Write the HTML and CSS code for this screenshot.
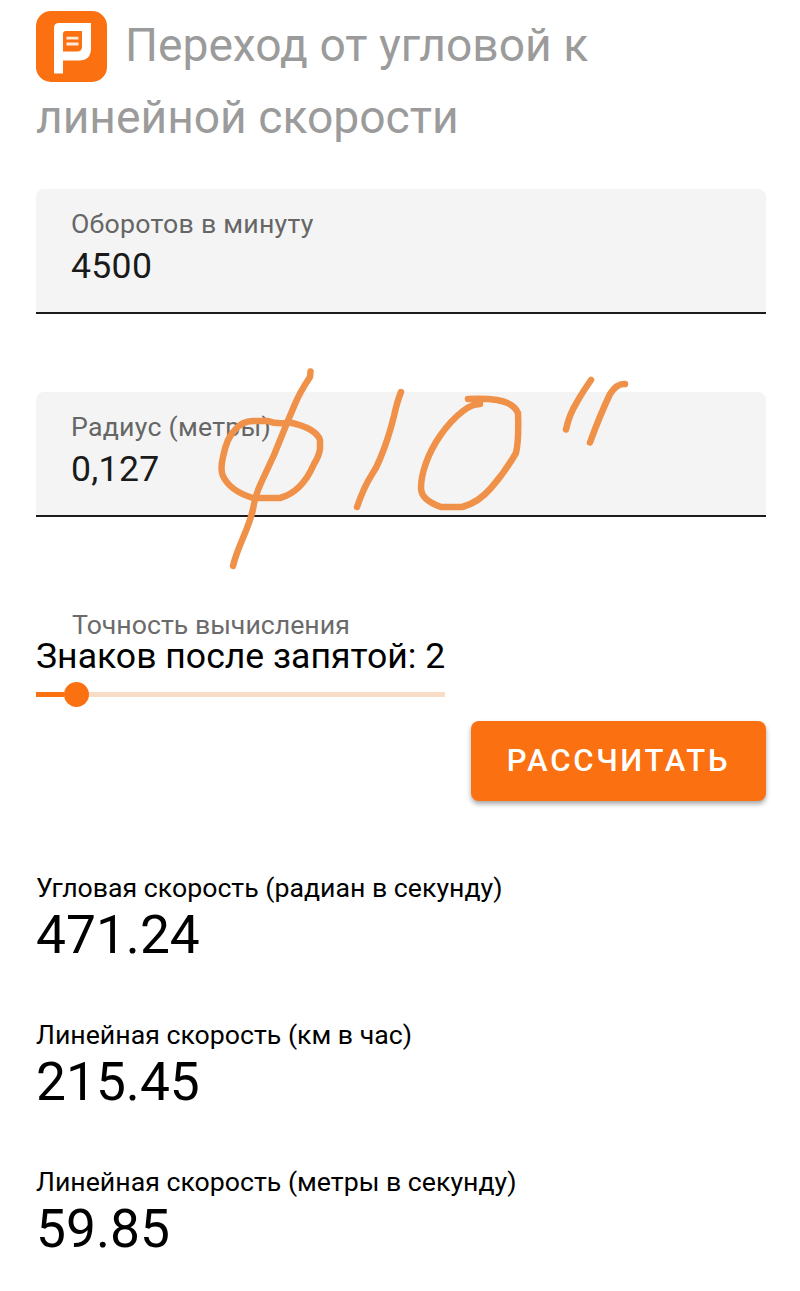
FILE: index.html
```html
<!DOCTYPE html>
<html lang="ru">
<head>
  <meta charset="utf-8">
  <title>Переход от угловой к линейной скорости</title>
  <meta name="viewport" content="width=device-width, initial-scale=1">
  <link rel="stylesheet" href="styles.css">
</head>
<body>
  <h1 class="title"><svg class="logo" viewBox="0 0 71 71">
      <rect width="71" height="71" rx="15" fill="#fb7011"/>
      <path d="M18 62.500V17Q18 12 23 12H55V37Q55 49.500 43 49.500H27V62.500Z" fill="#fff"/>
      <path d="M30 20H46V35.500Q46 40.500 41 40.500H27V23Q27 20 30 20Z" fill="#fb7011"/>
      <path d="M30.500 27.200H42.500M30.500 33H42.500" stroke="#ffeadb" stroke-width="2.800"/>
    </svg>Переход от угловой к линейной скорости</h1>

  <form id="calcForm">
    <div class="field">
      <label for="rpm">Оборотов в минуту</label>
      <input type="text" id="rpm" name="rpm" value="4500">
    </div>

    <div class="field">
      <label for="radius">Радиус (метры)</label>
      <input type="text" id="radius" name="radius" value="0,127">
    </div>

    <div class="precision">
      <div class="precision-label">Точность вычисления</div>
      <div class="precision-value">Знаков после запятой: 2</div>
      <div class="slider">
        <div class="slider-fill"></div>
        <div class="slider-thumb"></div>
        <div class="slider-rest"></div>
      </div>
    </div>

    <button type="button" class="calc-btn">Рассчитать</button>
  </form>

  <div class="result">
    <div class="result-label">Угловая скорость (радиан в секунду)</div>
    <div class="result-value">471.24</div>
  </div>
  <div class="result">
    <div class="result-label">Линейная скорость (км в час)</div>
    <div class="result-value">215.45</div>
  </div>
  <div class="result">
    <div class="result-label">Линейная скорость (метры в секунду)</div>
    <div class="result-value">59.85</div>
  </div>

  <!-- handwritten note over the radius field -->
  <svg class="note" viewBox="200 360 440 220">
    <path d="M310.5 371.5L310 377Q300 392 295 404L287 423L274 455L261 483Q255 496 253 509C249 529 238 545 233 566"/>
    <path d="M286 423Q275 424 268 421H253Q242 421 235 430Q227 437 223 457Q220 470 223 476Q230 491 253 498H280Q302 492 314 464Q319 456 320 449V440Q316 428 288 422"/>
    <path d="M401 392Q397 402 394 416Q388 440 380 459Q377 467 371 476Q364 487 357 507"/>
    <path d="M480 404Q472 404 463 411C445 425 432 446 426 463Q421 477 421 488Q421 500 441 507H462Q478 503 491 488Q505 472 516 453Q519 440 518 413Q514 403 497 400Q485 398 468 399"/>
    <path d="M591 380Q582 393 577 402Q569 415 566 429.500"/>
    <path d="M625 384Q617 383 610 394Q600 415 590 442.500"/>
  </svg>
</body>
</html>
```
FILE: styles.css
```css
* { box-sizing: border-box; }
body { font-family: Roboto, sans-serif; margin: 0; padding: 10px 34px 0 36px; background: #fff; color: #000; }

.title { margin: 0 0 36px; font-size: 46.2px; font-weight: 400; line-height: 71.5px; color: #9b9b9b; }
.logo { width: 71px; height: 71px; margin: 1px 18px -1px 0; vertical-align: top; }

.field { height: 125px; margin-bottom: 77.5px; padding: 19px 36px 0; background: #f4f4f4; border-bottom: 2px solid #1c1c1c; border-radius: 8px 8px 0 0; }
.field label { display: block; margin-left: -1px; font-size: 26.7px; line-height: 32px; letter-spacing: 0.25px; color: #666; }
.field input { display: block; width: 100%; height: 42px; margin: 5px 0 0 -1px; padding: 0; border: none; background: none; font-family: inherit; font-size: 35.6px; letter-spacing: 0.3px; color: #1a1a1a; }

.precision { width: 409px; margin-top: 93px; white-space: nowrap; }
.precision-label { padding-left: 36px; font-size: 26.7px; line-height: 30px; color: #6b6b6b; }
.precision-value { font-size: 35.6px; line-height: 32px; }
.slider { display: flex; align-items: center; height: 26px; margin-top: 10px; }
.slider-fill { width: 28px; height: 5px; background: #fb7011; }
.slider-thumb { width: 25px; height: 25px; border-radius: 50%; background: #fb7011; }
.slider-rest { flex: 1; height: 5px; background: #f9dcc5; }

.calc-btn { display: block; width: 295px; height: 80px; margin: 13px 0 0 auto; padding: 0; border: none; border-radius: 8px; background: #fb7011; color: #fff; font-family: inherit; font-size: 31.1px; font-weight: 500; letter-spacing: 2.7px; text-transform: uppercase; box-shadow: 0 3px 5px rgba(0, 0, 0, 0.35); }

#calcForm { margin-bottom: 72px; }
.result { height: 147px; }
.result-label { font-size: 26.7px; line-height: 31px; }
.result-value { font-size: 53.3px; line-height: 62px; }

.note { position: absolute; left: 200px; top: 360px; width: 440px; height: 220px; fill: none; stroke: #f0914a; stroke-width: 6.5; stroke-linecap: round; stroke-linejoin: round; }
```
